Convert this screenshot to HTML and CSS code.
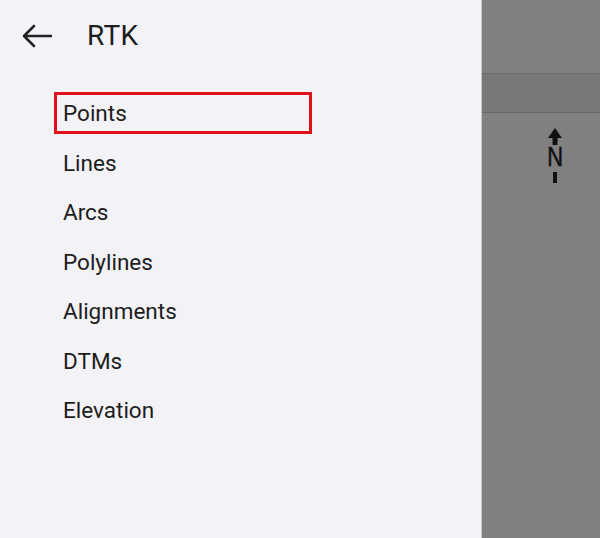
FILE: index.html
```html
<!DOCTYPE html>
<html>
<head>
<meta charset="utf-8">
<link rel="stylesheet" href="styles.css">
</head>
<body>
<div class="app">
  <aside class="panel">
    <header class="header">
      <svg class="back" width="32" height="24" viewBox="0 0 32 24">
        <path d="M30 12H3M13 2L3 12l10 10" fill="none" stroke="#222" stroke-width="2.6" stroke-linecap="round" stroke-linejoin="round"/>
      </svg>
      <span class="title">RTK</span>
    </header>
    <ul class="menu">
      <li class="item selected">Points</li>
      <li class="item">Lines</li>
      <li class="item">Arcs</li>
      <li class="item">Polylines</li>
      <li class="item">Alignments</li>
      <li class="item">DTMs</li>
      <li class="item">Elevation</li>
    </ul>
  </aside>
  <main class="map">
    <div class="strip"></div>
    <div class="compass">
      <svg class="arrow" width="14" height="17" viewBox="0 0 14 17">
        <path d="M7 0L14 10H9.5v7h-5v-7H0z" fill="#111"/>
      </svg>
      <span class="north">N</span>
      <span class="tick"></span>
    </div>
  </main>
</div>
</body>
</html>
```

FILE: styles.css
```css
html, body {
  margin: 0;
  padding: 0;
}
body {
  width: 600px;
  height: 538px;
  overflow: hidden;
  font-family: Roboto, "Liberation Sans", sans-serif;
  color: #1d1d20;
}
.app {
  display: flex;
  height: 538px;
}
.panel {
  width: 481px;
  background: #f2f2f7;
  flex: none;
}
.header {
  display: flex;
  align-items: center;
  height: 72px;
  padding-left: 21px;
}
.back {
  display: block;
}
.title {
  font-size: 28px;
  margin-left: 34px;
  margin-top: -1px;
  letter-spacing: 0.3px;
}
.menu {
  list-style: none;
  margin: 20px 0 0 54px;
  padding: 0;
  display: flex;
  flex-direction: column;
  gap: 7.5px;
}
.item {
  width: 258px;
  height: 42px;
  box-sizing: border-box;
  padding-left: 6px;
  display: flex;
  align-items: center;
  font-size: 22.5px;
  border: 3px solid transparent;
}
.item.selected {
  border-color: #e0101c;
}
.map {
  flex: 1;
  background: #808080;
  position: relative;
  border-left: 1px solid #c8c8cc;
}
.strip {
  margin-top: 73px;
  height: 38px;
  background: #787878;
  border-top: 1px solid #6a6a6a;
  border-bottom: 1px solid #6a6a6a;
}
.compass {
  position: absolute;
  left: 64px;
  top: 128px;
  width: 18px;
  display: flex;
  flex-direction: column;
  align-items: center;
}
.arrow {
  display: block;
}
.north {
  font-family: "Liberation Sans", sans-serif;
  font-size: 28px;
  line-height: 24px;
  height: 24px;
  transform: scaleX(0.78);
  color: #111;
  -webkit-text-stroke: 0.6px #111;
}
.tick {
  display: block;
  width: 4px;
  height: 11px;
  background: #111;
  margin-top: 3px;
}
```
